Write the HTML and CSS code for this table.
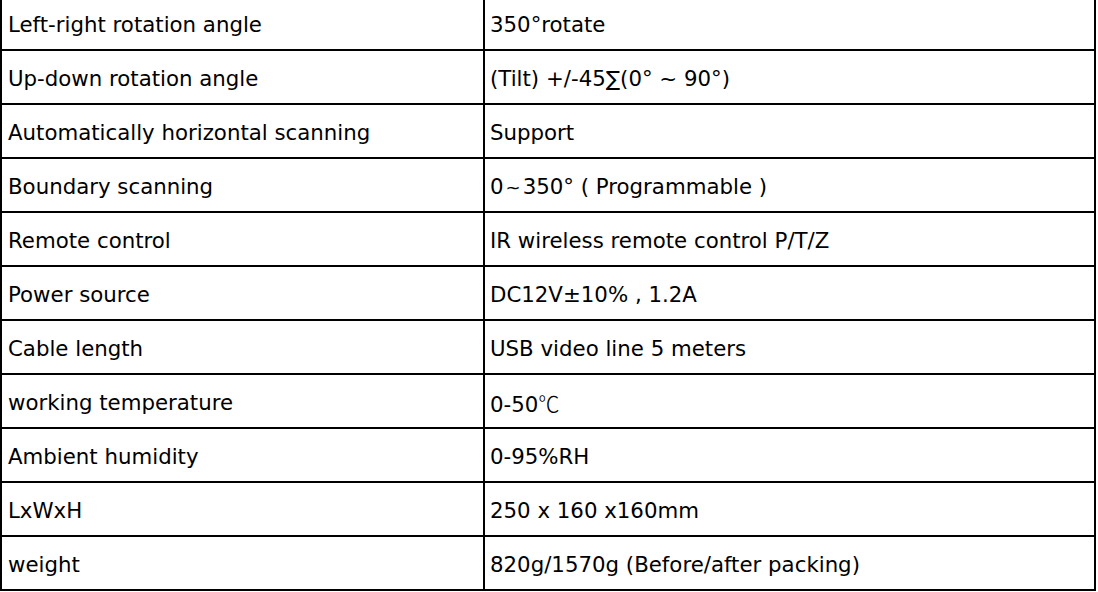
FILE: index.html
```html
<!DOCTYPE html>
<html>
<head>
<meta charset="utf-8">
<link rel="stylesheet" href="styles.css">
</head>
<body>
<table class="spec">
<tr><td class="k">Left-right rotation angle</td><td class="v">350°rotate</td></tr>
<tr><td class="k">Up-down rotation angle</td><td class="v">(Tilt) +/-45<span class="sym">∑</span>(0° ~ 90°)</td></tr>
<tr><td class="k">Automatically horizontal scanning</td><td class="v">Support</td></tr>
<tr><td class="k">Boundary scanning</td><td class="v">0<span class="tl">~</span>350° ( Programmable )</td></tr>
<tr><td class="k">Remote control</td><td class="v">IR wireless remote control P/T/Z</td></tr>
<tr><td class="k">Power source</td><td class="v">DC12V±10% , 1.2A</td></tr>
<tr><td class="k">Cable length</td><td class="v">USB video line 5 meters</td></tr>
<tr><td class="k">working temperature</td><td class="v">0-50<span class="cjk">℃</span></td></tr>
<tr><td class="k">Ambient humidity</td><td class="v">0-95%RH</td></tr>
<tr><td class="k">LxWxH</td><td class="v">250 x 160 x160mm</td></tr>
<tr><td class="k">weight</td><td class="v">820g/1570g (Before/after packing)</td></tr>
</table>
</body>
</html>
```
FILE: styles.css
```css
html, body {
  margin: 0;
  padding: 0;
  background: #fff;
}
.spec {
  border-collapse: collapse;
  width: 1096px;
  margin-top: -5px;
  font-family: "DejaVu Sans", sans-serif;
  font-size: 21.3px;
  color: #000;
}
.spec td {
  border: 2px solid #000;
  height: 54px;
  padding: 3px 0 0 6px;
  box-sizing: border-box;
  vertical-align: middle;
}
.spec .k {
  width: 483px;
}
.spec .v {
  padding-left: 5px;
}
.tl {
  margin: 0 2px;
  font-size: 18px;
}
.cjk {
  font-family: "Noto Sans CJK SC", sans-serif;
  font-weight: 300;
}
```
